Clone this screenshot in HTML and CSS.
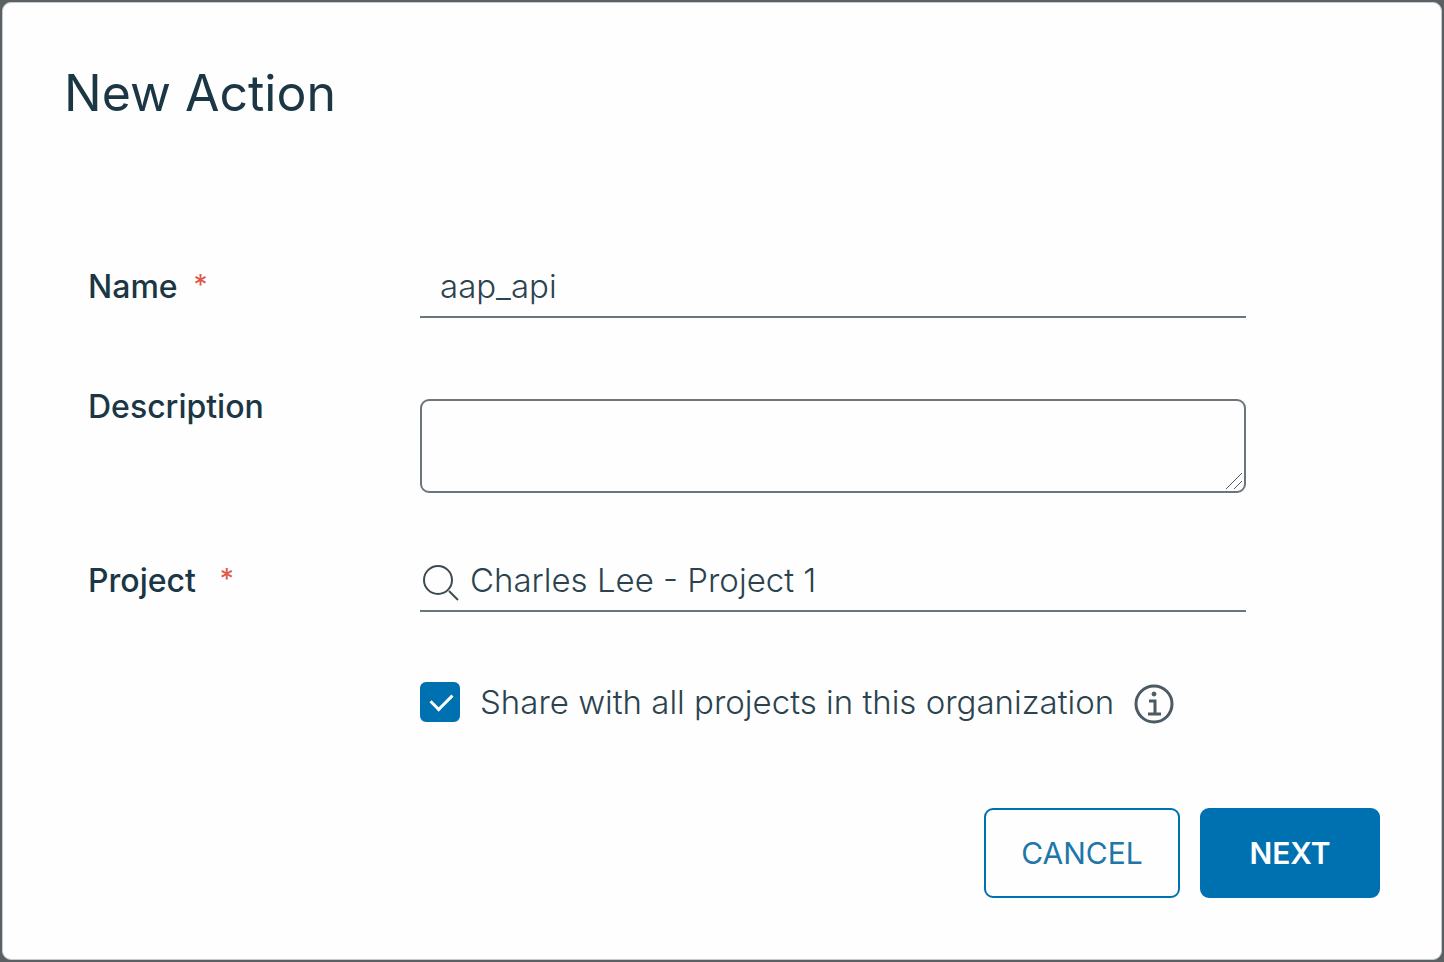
FILE: index.html
```html
<!DOCTYPE html>
<html lang="en">
<head>
<meta charset="utf-8">
<meta name="viewport" content="width=device-width, initial-scale=1">
<title>New Action</title>
<link rel="stylesheet" href="styles.css">
</head>
<body>
<main class="dialog" role="dialog" aria-labelledby="dialog-title">
  <h1 class="dialog-title" id="dialog-title">New Action</h1>
  <form class="dialog-form">
    <div class="fields">
      <div class="row">
        <label class="label" for="name">Name<span class="required">*</span></label>
        <div class="control line-control">
          <input class="text-input name-input" id="name" type="text" value="aap_api">
        </div>
      </div>
      <div class="row row-description">
        <label class="label" for="description">Description</label>
        <div class="control area-control">
          <textarea class="text-area" id="description"></textarea>
          <svg class="grip" viewBox="0 0 18 18" aria-hidden="true"><path d="M1 17L17 1M9 17L17 9"/></svg>
        </div>
      </div>
      <div class="row row-project">
        <label class="label label-project" for="project">Project<span class="required">*</span></label>
        <div class="control line-control">
          <svg class="search-icon" viewBox="0 0 40 40" aria-hidden="true"><circle cx="18" cy="18" r="14"/><path d="M29 29L38 38"/></svg>
          <input class="text-input" id="project" type="text" value="Charles Lee - Project 1">
        </div>
      </div>
      <div class="share">
        <input class="checkbox" id="share" type="checkbox" checked>
        <label class="share-label" for="share">Share with all projects in this organization</label>
        <svg class="info-icon" viewBox="0 0 40 40" role="img" aria-label="Information"><circle class="info-ring" cx="20" cy="20" r="18"/><circle class="info-dot" cx="20" cy="10" r="2"/><path class="info-stem" d="M15 17H21V30M14 30H27"/></svg>
      </div>
    </div>
    <div class="actions">
      <button class="button button-outline" type="button">CANCEL</button>
      <button class="button button-primary" type="submit">NEXT</button>
    </div>
  </form>
</main>
</body>
</html>
```
FILE: styles.css
```css
* {
  box-sizing: border-box;
}

body {
  margin: 0;
  padding: 2px;
  min-height: 100vh;
  display: flex;
  background: #5b6162;
  color: #1b3644;
  font-family: Inter, "Noto Sans", sans-serif;
  font-size: 32px;
}

.dialog {
  flex: 1;
  display: flex;
  flex-direction: column;
  padding: 60px 61px 61px;
  border: 1px solid #c3cccf;
  border-radius: 9px;
  background: #fefefe;
}

.dialog-title {
  margin: 0;
  font-size: 50px;
  line-height: 60px;
  font-weight: 400;
}

.dialog-form {
  flex: 1;
  display: flex;
  flex-direction: column;
  justify-content: space-between;
  gap: 40px;
  padding-top: 132px;
}

.fields {
  display: flex;
  flex-direction: column;
  padding: 0 134px 0 24px;
}

.row {
  display: flex;
  align-items: flex-start;
}

.row-description {
  margin-top: 65px;
}

.row-project {
  margin-top: 56px;
}

.label {
  flex: 0 0 332px;
  display: flex;
  align-items: flex-start;
  gap: 16px;
  line-height: 48px;
  padding-top: 8px;
  font-weight: 500;
}

.row-description .label {
  padding-top: 0;
}

.label-project {
  gap: 24px;
}

.required {
  color: #e0574a;
  font-size: 28px;
  line-height: 44px;
  font-weight: 400;
}

.control {
  flex: 1;
  min-width: 0;
}

.line-control {
  display: flex;
  align-items: center;
  height: 63px;
  border-bottom: 2px solid #6a767c;
}

.text-input {
  flex: 1;
  min-width: 0;
  height: 60px;
  padding: 0 10px;
  border: 0;
  outline: 0;
  background: transparent;
  color: #2b434f;
  font: inherit;
  font-size: 33px;
  font-weight: 300;
}

.name-input {
  padding: 0 20px;
}

.area-control {
  position: relative;
  padding-top: 16px;
}

.text-area {
  display: block;
  width: 100%;
  height: 94px;
  padding: 8px 20px;
  border: 2px solid #6a767c;
  border-radius: 9px;
  outline: 0;
  background: transparent;
  color: inherit;
  font: inherit;
  resize: none;
}

.grip {
  position: absolute;
  right: 3px;
  bottom: 3px;
  width: 18px;
  height: 18px;
  fill: none;
  stroke: #555b5e;
  stroke-width: 1;
  pointer-events: none;
}

.search-icon {
  flex: none;
  width: 40px;
  height: 40px;
  margin-top: 4px;
  fill: none;
  stroke: #3d4a50;
  stroke-width: 2;
}

.share {
  display: flex;
  align-items: center;
  margin: 66px 0 0 332px;
}

.checkbox {
  appearance: none;
  position: relative;
  flex: none;
  width: 40px;
  height: 40px;
  margin: 0 20px 0 0;
  border: 2px solid #6a767c;
  border-radius: 6px;
}

.checkbox:checked {
  border-color: #0071b0;
  background: #0071b0;
}

.checkbox:checked::after {
  content: "";
  position: absolute;
  left: 9px;
  top: 9px;
  width: 18px;
  height: 10px;
  border: solid #fff;
  border-width: 0 0 3px 3px;
  transform: rotate(-45deg);
}

.share-label {
  color: #2b434f;
  font-size: 33px;
  line-height: 48px;
  font-weight: 300;
}

.info-icon {
  flex: none;
  width: 40px;
  height: 40px;
  margin: 4px 0 0 20px;
  fill: none;
  stroke: #4c5b62;
  stroke-width: 3;
}

.info-dot {
  fill: #4c5b62;
  stroke-width: 1;
}

.actions {
  display: flex;
  justify-content: flex-end;
  gap: 20px;
}

.button {
  height: 90px;
  padding: 0 32px;
  border: 2px solid #0071b0;
  border-radius: 9px;
  font: inherit;
  font-size: 30px;
  cursor: pointer;
}

.button-outline {
  min-width: 196px;
  background: transparent;
  color: #2076a8;
}

.button-primary {
  min-width: 180px;
  background: #0071b0;
  color: #fff;
  font-weight: 600;
}
```
